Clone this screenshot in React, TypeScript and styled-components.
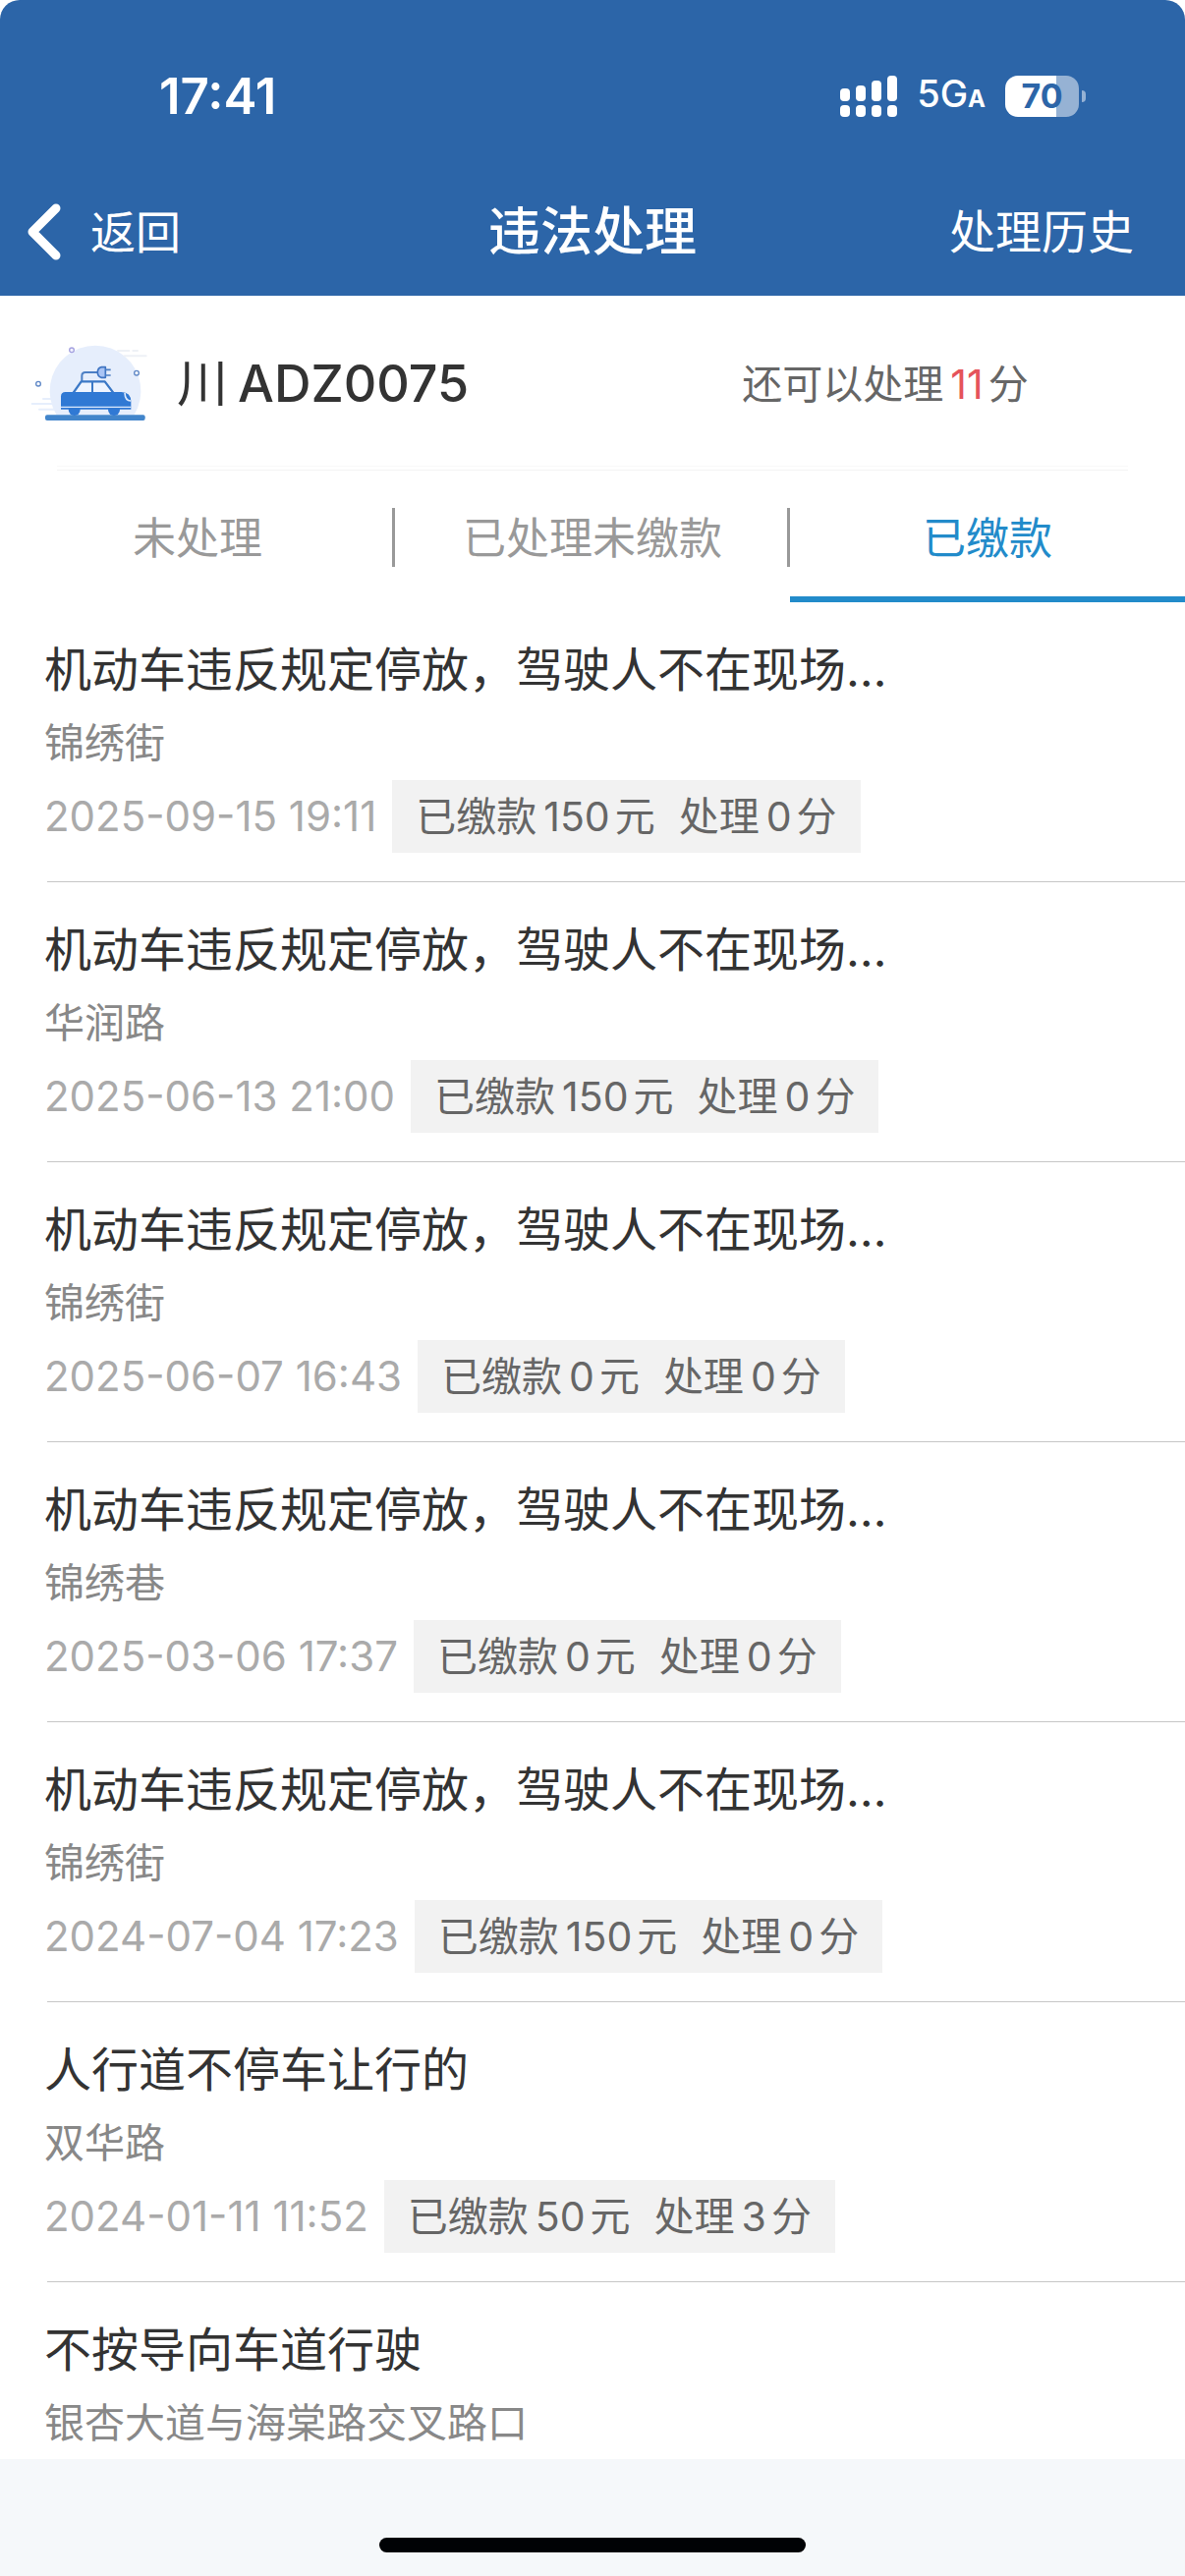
import React from 'react';
import styled, { createGlobalStyle } from 'styled-components';

const GlobalStyle = createGlobalStyle`
  *, *::before, *::after { box-sizing: border-box; }
  body {
    margin: 0;
    background: #ffffff;
    font-family: Inter, "Noto Sans CJK SC", sans-serif;
    color: #333333;
  }
  h1, h2, p, ul { margin: 0; padding: 0; font-weight: 400; }
  button {
    margin: 0;
    padding: 0;
    border: 0;
    background: none;
    font: inherit;
    color: inherit;
    cursor: pointer;
  }
`;

const Page = styled.div`
  display: flex;
  flex-direction: column;
  min-height: 100vh;
  background: #ffffff;
`;

const Header = styled.header`
  background: #2c65a8;
  color: #ffffff;
  border-radius: 20px 20px 0 0;
`;

const StatusBar = styled.div`
  display: flex;
  align-items: center;
  justify-content: space-between;
  height: 171px;
  padding: 25px 101px 0 162px;
`;

const Clock = styled.time`
  font-size: 51px;
  font-weight: 600;
  line-height: 60px;
`;

const StatusIcons = styled.div`
  display: flex;
  align-items: center;
  gap: 20px;
`;

const Network = styled.span`
  font-size: 38px;
  font-weight: 500;
  line-height: 60px;
`;

const NetworkSuffix = styled.span`
  font-size: 24px;
  font-weight: 700;
`;

const BatteryGroup = styled.div`
  display: flex;
  align-items: center;
  gap: 3px;
`;

const Battery = styled.div`
  display: flex;
  align-items: center;
  justify-content: center;
  width: 75px;
  height: 42px;
  border-radius: 13px;
  background: linear-gradient(to right, #ffffff 70%, #96b2d4 70%);
  color: #2c65a8;
  font-size: 34px;
  font-weight: 700;
  line-height: 42px;
`;

const BatteryNub = styled.div`
  width: 4px;
  height: 12px;
  border-radius: 0 4px 4px 0;
  background: #96b2d4;
`;

const NavBar = styled.nav`
  display: grid;
  grid-template-columns: 1fr auto 1fr;
  align-items: center;
  height: 130px;
  padding: 0 28px;
`;

const BackButton = styled.button`
  display: flex;
  align-items: center;
  justify-self: start;
  gap: 30px;
  font-size: 46px;
  line-height: 64px;
`;

const NavTitle = styled.h1`
  font-size: 53px;
  font-weight: 500;
  line-height: 64px;
`;

const HistoryButton = styled.button`
  justify-self: end;
  padding-right: 24px;
  font-size: 47px;
  line-height: 64px;
`;

const Vehicle = styled.section`
  display: flex;
  align-items: center;
  height: 173px;
  padding: 6px 0 0 20px;
`;

const Plate = styled.h2`
  display: flex;
  flex: 1;
  gap: 10px;
  padding-left: 10px;
  font-size: 52px;
  font-weight: 500;
  line-height: 64px;
`;

const Province = styled.span`
  font-weight: 400;
`;

const Remaining = styled.p`
  width: 38%;
  font-size: 41px;
  line-height: 64px;
  color: #666666;
`;

const Figure = styled.span<{ $alert?: boolean }>`
  margin: 0 5px 0 7px;
  color: ${({ $alert }) => ($alert ? '#e5535a' : 'inherit')};
`;

const Divider = styled.div`
  height: 5px;
  margin: 0 58px;
  border-top: 1px solid #f9f9f9;
  border-bottom: 1px solid #f3f3f3;
`;

const Tabs = styled.div`
  display: grid;
  grid-template-columns: repeat(3, 1fr);
  height: 134px;
`;

const Tab = styled.button<{ $active: boolean }>`
  position: relative;
  font-size: 44px;
  line-height: 64px;
  color: ${({ $active }) => ($active ? '#228bca' : '#999999')};
  border-top: 10px solid transparent;
  border-bottom: 6px solid ${({ $active }) => ($active ? '#228bca' : 'transparent')};

  &:not(:last-child)::after {
    content: '';
    position: absolute;
    top: 28px;
    right: 0;
    width: 3px;
    height: 60px;
    background: #999999;
  }
`;

const Records = styled.ul`
  flex: 1;
  list-style: none;
`;

const Record = styled.li`
  padding: 37px 0 0 45px;

  &:not(:last-child)::after {
    content: '';
    display: block;
    height: 1px;
    margin: 29px 0 0 3px;
    background: #c6c6c6;
  }

  &:last-child {
    padding-bottom: 4px;
  }
`;

const Offence = styled.h2`
  font-size: 48px;
  line-height: 64px;
  margin-bottom: 10px;
`;

const Place = styled.p`
  font-size: 41px;
  line-height: 64px;
  color: #888888;
`;

const Details = styled.div`
  display: flex;
  align-items: center;
  gap: 16px;
  margin-top: 6px;
`;

const When = styled.time`
  font-size: 42px;
  line-height: 64px;
  color: #aaaaaa;
`;

const Tag = styled.span`
  display: flex;
  gap: 24px;
  padding: 0 24px;
  background: #f2f2f2;
  color: #666666;
  font-size: 41px;
  line-height: 74px;
`;

const Footer = styled.footer`
  display: flex;
  align-items: flex-end;
  justify-content: center;
  height: 119px;
  padding-bottom: 24px;
  background: #f5f8fa;
`;

const HomeIndicator = styled.div`
  width: 36%;
  height: 15px;
  border-radius: 8px;
  background: #000205;
`;

interface Violation {
  offence: string;
  place: string;
  when?: string;
  paid?: number;
  points?: number;
}

const PARKING = '机动车违反规定停放，驾驶人不在现场…';

const violations: Violation[] = [
  { offence: PARKING, place: '锦绣街', when: '2025-09-15 19:11', paid: 150, points: 0 },
  { offence: PARKING, place: '华润路', when: '2025-06-13 21:00', paid: 150, points: 0 },
  { offence: PARKING, place: '锦绣街', when: '2025-06-07 16:43', paid: 0, points: 0 },
  { offence: PARKING, place: '锦绣巷', when: '2025-03-06 17:37', paid: 0, points: 0 },
  { offence: PARKING, place: '锦绣街', when: '2024-07-04 17:23', paid: 150, points: 0 },
  { offence: '人行道不停车让行的', place: '双华路', when: '2024-01-11 11:52', paid: 50, points: 3 },
  { offence: '不按导向车道行驶', place: '银杏大道与海棠路交叉路口' },
];

const tabs = ['未处理', '已处理未缴款', '已缴款'];

const SignalIcon = () => (
  <svg width="58" height="42" viewBox="0 0 58 42" fill="#fff" aria-hidden="true">
    <rect x="0" y="13" width="10" height="13" rx="4" />
    <rect x="16" y="10" width="10" height="16" rx="4" />
    <rect x="32" y="5" width="10" height="21" rx="4" />
    <rect x="48" y="0" width="10" height="26" rx="4" />
    {[0, 16, 32, 48].map((x) => (
      <rect key={x} x={x} y="30" width="10" height="12" rx="4" />
    ))}
  </svg>
);

const BackIcon = () => (
  <svg width="34" height="58" viewBox="0 0 34 58" fill="none" aria-hidden="true">
    <path d="M29 5 5 29l24 24" stroke="#fff" strokeWidth="9" strokeLinecap="round" strokeLinejoin="round" />
  </svg>
);

const CarIcon = () => (
  <svg width="150" height="110" viewBox="0 0 450 330" fill="none" aria-hidden="true">
    <path d="M112 258A139 139 0 1 1 350 258Z" fill="#e6eefc" />
    <g stroke="#e6eefc" strokeWidth="6" strokeLinecap="round">
      <path d="M72 210h40M38 225h66M60 242h50" />
      <path d="M300 63h34M346 63h14M320 79h66" stroke="#eef1f6" />
    </g>
    <circle cx="159" cy="61" r="7" stroke="#a5a2e0" strokeWidth="4" fill="#f4f4ff" />
    <circle cx="57" cy="164" r="7" stroke="#5d86c6" strokeWidth="4" fill="#fff" />
    <circle cx="357" cy="131" r="7" stroke="#5d86c6" strokeWidth="4" fill="#fff" />
    <path d="M190 156v-16q0-11 11-11h38" stroke="#4c7fc4" strokeWidth="6" />
    <path d="M262 113h-12q-12 3-12 16t12 16h12z" fill="#a9c4f5" stroke="#3f74c2" strokeWidth="5" strokeLinejoin="round" />
    <path d="M262 121h16M262 138h16" stroke="#4c7fc4" strokeWidth="5" />
    <path d="M162 194l26-37h72l28 37z" fill="#eef4ff" stroke="#3b78c6" strokeWidth="7" strokeLinejoin="round" />
    <path d="M222 158v34" stroke="#3b78c6" strokeWidth="6" />
    <rect x="78" y="259" width="305" height="17" rx="6" fill="#4285cb" />
    <circle cx="167" cy="243" r="18" fill="#3079d4" />
    <circle cx="288" cy="243" r="18" fill="#3079d4" />
    <path d="M126 203q0-14 14-14h170q30 0 30 30v23H126z" fill="#3079d4" />
    <path d="M126 235h214" stroke="#dce9fc" strokeWidth="4" />
    <path d="M321 192q1 24 18 24" stroke="#dce9fc" strokeWidth="5" />
  </svg>
);

export default function App() {
  const [active, setActive] = React.useState(2);

  return (
    <>
      <GlobalStyle />
      <Page>
        <Header>
          <StatusBar>
            <Clock>17:41</Clock>
            <StatusIcons>
              <SignalIcon />
              <Network>
                5G<NetworkSuffix>A</NetworkSuffix>
              </Network>
              <BatteryGroup>
                <Battery>70</Battery>
                <BatteryNub />
              </BatteryGroup>
            </StatusIcons>
          </StatusBar>
          <NavBar>
            <BackButton type="button">
              <BackIcon />
              返回
            </BackButton>
            <NavTitle>违法处理</NavTitle>
            <HistoryButton type="button">处理历史</HistoryButton>
          </NavBar>
        </Header>

        <Vehicle>
          <CarIcon />
          <Plate>
            <Province>川</Province>
            <span>ADZ0075</span>
          </Plate>
          <Remaining>
            还可以处理<Figure $alert>11</Figure>分
          </Remaining>
        </Vehicle>
        <Divider />

        <Tabs role="tablist">
          {tabs.map((label, index) => (
            <Tab
              key={label}
              type="button"
              role="tab"
              aria-selected={index === active}
              $active={index === active}
              onClick={() => setActive(index)}
            >
              {label}
            </Tab>
          ))}
        </Tabs>

        <Records>
          {violations.map((item, index) => (
            <Record key={index}>
              <Offence>{item.offence}</Offence>
              <Place>{item.place}</Place>
              {item.when && (
                <Details>
                  <When>{item.when}</When>
                  <Tag>
                    <span>
                      已缴款<Figure>{item.paid}</Figure>元
                    </span>
                    <span>
                      处理<Figure>{item.points}</Figure>分
                    </span>
                  </Tag>
                </Details>
              )}
            </Record>
          ))}
        </Records>

        <Footer>
          <HomeIndicator />
        </Footer>
      </Page>
    </>
  );
}
